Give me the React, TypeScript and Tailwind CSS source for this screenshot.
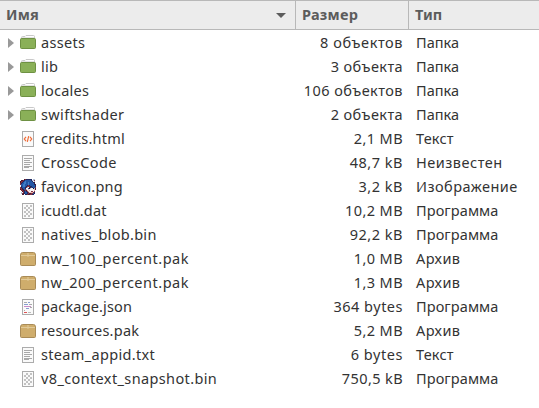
import React from "react";

type Kind = "folder" | "html" | "text" | "image" | "binary" | "archive" | "json";
type Entry = { name: string; size: string; type: string; kind: Kind; track: string; sizeTrack: string };

const entries: Entry[] = [
  { name: "assets", size: "8 объектов", type: "Папка", kind: "folder", track: "tracking-[.3px]", sizeTrack: "tracking-[.57px]" },
  { name: "lib", size: "3 объекта", type: "Папка", kind: "folder", track: "tracking-[.2px]", sizeTrack: "tracking-[.4px]" },
  { name: "locales", size: "106 объектов", type: "Папка", kind: "folder", track: "tracking-[.25px]", sizeTrack: "tracking-[.45px]" },
  { name: "swiftshader", size: "2 объекта", type: "Папка", kind: "folder", track: "tracking-[.36px]", sizeTrack: "tracking-[.4px]" },
  { name: "credits.html", size: "2,1 MB", type: "Текст", kind: "html", track: "tracking-[.25px]", sizeTrack: "tracking-[.4px]" },
  { name: "CrossCode", size: "48,7 kB", type: "Неизвестен", kind: "text", track: "tracking-[.35px]", sizeTrack: "tracking-[.5px]" },
  { name: "favicon.png", size: "3,2 kB", type: "Изображение", kind: "image", track: "tracking-[.2px]", sizeTrack: "tracking-[.5px]" },
  { name: "icudtl.dat", size: "10,2 MB", type: "Программа", kind: "binary", track: "tracking-[.2px]", sizeTrack: "tracking-[.4px]" },
  { name: "natives_blob.bin", size: "92,2 kB", type: "Программа", kind: "binary", track: "tracking-[.3px]", sizeTrack: "tracking-[.5px]" },
  { name: "nw_100_percent.pak", size: "1,0 MB", type: "Архив", kind: "archive", track: "tracking-[.5px]", sizeTrack: "tracking-[.4px]" },
  { name: "nw_200_percent.pak", size: "1,3 MB", type: "Архив", kind: "archive", track: "tracking-[.5px]", sizeTrack: "tracking-[.4px]" },
  { name: "package.json", size: "364 bytes", type: "Программа", kind: "json", track: "tracking-[.15px]", sizeTrack: "tracking-[.5px]" },
  { name: "resources.pak", size: "5,2 MB", type: "Архив", kind: "archive", track: "tracking-[.25px]", sizeTrack: "tracking-[.4px]" },
  { name: "steam_appid.txt", size: "6 bytes", type: "Текст", kind: "text", track: "tracking-[.33px]", sizeTrack: "tracking-[.55px]" },
  { name: "v8_context_snapshot.bin", size: "750,5 kB", type: "Программа", kind: "binary", track: "tracking-[.37px]", sizeTrack: "tracking-[.4px]" },
];

const typeTracks: Record<string, string> = {
  Папка: "tracking-normal",
  Текст: "tracking-[.2px]",
  Неизвестен: "tracking-[.5px]",
  Изображение: "tracking-[.48px]",
  Программа: "tracking-[.1px]",
  Архив: "tracking-[.4px]",
};

const portraitColors: Record<string, string> = {
  n: "#1e2860", b: "#2456a4", l: "#3d7dc6", d: "#4c1c30", r: "#83303f",
  w: "#f6f3f5", p: "#e9bcb6", k: "#1a1426", g: "#b3bfd8",
};

const portrait = [
  "....drnnnnnn.gg.",
  ".ddrnbbbbbbnggr.",
  "drrnblbbbbbbnwg.",
  "drnbllbblbbbbnd.",
  "rnbbllbblbbbbbn.",
  "rbbllbbblbbbbbnd",
  ".bbllbbnrnbbbbbn",
  ".nbllbnrrrnnbbbn",
  "rnbbbnrgwddbnbbr",
  "rrnbbnwwbkgwwkgd",
  "drdnbrgwpwwwwwpd",
  ".rrdnrdpwpwwwwp.",
  "..drnbnrpwwrrwr.",
  ".gwrnbbnrpppprn.",
  ".grdnbbnrddrrbn.",
  "..dd.nnrddrrnn..",
];

function Page({ children }: { children?: React.ReactNode }) {
  return (
    <>
      <rect x="2.5" y=".5" width="11" height="15" fill="#fafafa" stroke="#acacac" />
      {children}
    </>
  );
}

function FileIcon({ kind }: { kind: Kind }) {
  return (
    <svg className="size-4 shrink-0" viewBox="0 0 16 16" fill="none">
      {kind === "folder" && (
        <>
          <path d="M1.5 6V2.5Q1.5 1.5 2.5 1.5H5L6 .5H13.5Q14.5 .5 14.5 1.5V6" fill="#fff" stroke="#c9c9c9" />
          <path d="M2 2.5H14" stroke="#e4e4e4" />
          <rect x=".5" y="3.5" width="15" height="10" rx="1" fill="#8ab058" stroke="#6e9143" />
        </>
      )}
      {kind === "html" && (
        <Page>
          <path d="M6 5.8L4.3 8L6 10.2M10 5.8L11.7 8L10 10.2M8.7 5.2L7.3 10.8" stroke="#ef6c38" strokeWidth="1.2" />
        </Page>
      )}
      {kind === "text" && (
        <Page>
          <path d="M4 3.5H12M4 5.5H10M4 7.5H12M4 9.5H10M4 11.5H12M4 12.5H9" stroke="#a8a8a8" />
        </Page>
      )}
      {kind === "binary" && (
        <Page>
          {Array.from({ length: 24 }, (_, i) => {
            const column = i % 4;
            const row = Math.floor(i / 4);
            return (column + row) % 2 === 1 ? (
              <rect key={i} x={4 + column * 2} y={2 + row * 2} width="2" height="2" fill="#c2c2c2" />
            ) : null;
          })}
        </Page>
      )}
      {kind === "json" && (
        <Page>
          <path d="M4 3.5H7M10 8.5H12M4 11.5H5M9 5.5H12" stroke="#aaa" />
          <path d="M8 3.5H10M4 5.5H8M6 9.5H9" stroke="#879ed0" />
          <path d="M4 7.5H11" stroke="#c78cc9" />
          <path d="M4 13.5H7" stroke="#df5252" />
          <path d="M8 13.5H11" stroke="#bbb" />
        </Page>
      )}
      {kind === "archive" && (
        <>
          <path d="M.5 4Q.5 1.5 2.5 1.5H13.5Q15.5 1.5 15.5 4V13.5Q15.5 14.5 14.5 14.5H1.5Q.5 14.5 .5 13.5Z" fill="#cfad6c" stroke="#a98b57" />
          <path d="M1 4.5H15M8 2V6" stroke="#e2ca98" />
        </>
      )}
      {kind === "image" &&
        portrait.flatMap((line, y) =>
          [...line].map((cell, x) =>
            cell === "." ? null : <rect key={`${x}-${y}`} x={x} y={y} width="1" height="1" fill={portraitColors[cell]} />,
          ),
        )}
    </svg>
  );
}

export default function App() {
  return (
    <main className="h-[408px] w-[539px] overflow-hidden bg-white font-['Noto_Sans',sans-serif] text-[14.5px] text-[#333]">
      <header className="grid h-[30px] grid-cols-[296px_113px_1fr] border-y border-[#b8b8b8] bg-[#ececec] font-bold text-[#5c5c5c]">
        <div className="flex items-center justify-between border-r border-[#b8b8b8] pr-[9px] pl-[6px]">
          <span className="tracking-[.2px]">Имя</span>
          <svg className="h-[5px] w-[10px]" viewBox="0 0 10 5">
            <path d="M0 0H10L5 5Z" fill="#5c5c5c" />
          </svg>
        </div>
        <div className="flex items-center border-r border-[#b8b8b8] pl-[6px]">
          <span className="tracking-[.25px]">Размер</span>
        </div>
        <div className="flex items-center pl-[6px]">
          <span>Тип</span>
        </div>
      </header>
      <ul className="pt-px">
        {entries.map((entry) => (
          <li key={entry.name} className="grid h-6 grid-cols-[296px_107px_1fr] items-center whitespace-nowrap">
            <div className="flex items-center pl-2">
              <span className="w-3">
                {entry.kind === "folder" && (
                  <svg className="h-[10px] w-[6px]" viewBox="0 0 6 10">
                    <path d="M0 0L6 5L0 10Z" fill="#999" />
                  </svg>
                )}
              </span>
              <FileIcon kind={entry.kind} />
              <span className={`ml-[5px] ${entry.track}`}>{entry.name}</span>
            </div>
            <span className={`text-right ${entry.sizeTrack}`}>{entry.size}</span>
            <span className={`pl-[13px] ${typeTracks[entry.type]}`}>{entry.type}</span>
          </li>
        ))}
      </ul>
    </main>
  );
}
